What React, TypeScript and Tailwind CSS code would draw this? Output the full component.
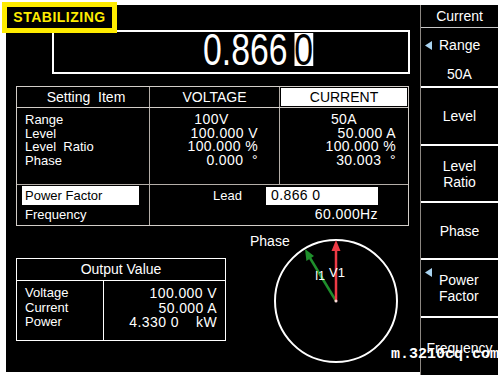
import React from 'react';

const Tri: React.FC = () => (
  <svg width="7" height="9" viewBox="0 0 7 9" className="shrink-0">
    <polygon points="0,4.5 7,0 7,9" fill="#a9d3f0" />
  </svg>
);

const SettingTable: React.FC = () => (
  <div className="mt-[12px] w-[393px] h-[140px] border border-[#d2cdc8] flex flex-col">
    {/* header */}
    <div className="h-[21px] flex border-b border-[#d2cdc8] text-[14px]">
      <div className="w-[133px] border-r border-[#b4aea8] flex items-center justify-center whitespace-pre pl-[6px]">Setting  Item</div>
      <div className="w-[130px] border-r border-[#b4aea8] flex items-center justify-center">VOLTAGE</div>
      <div className="flex-1 p-[1px]">
        <div className="h-full bg-white text-black flex items-center justify-center">CURRENT</div>
      </div>
    </div>

    {/* values */}
    <div className="h-[77px] flex border-b border-[#b4aea8] leading-[13.5px]">
      <div className="w-[133px] border-r border-[#b4aea8] pl-[8px] pt-[5px] text-[13px]">
        <div>Range</div>
        <div>Level</div>
        <div className="whitespace-pre">Level  Ratio</div>
        <div>Phase</div>
      </div>
      <div className="w-[130px] border-r border-[#b4aea8] pt-[5px] text-[14px] tracking-[0.4px] whitespace-pre">
        <div className="text-center pr-[6px]">100V</div>
        <div className="text-right pr-[21px]">100.000 V</div>
        <div className="text-right pr-[21px]">100.000 %</div>
        <div className="text-right pr-[21px]">0.000  °</div>
      </div>
      <div className="flex-1 pt-[5px] text-[14px] tracking-[0.4px] whitespace-pre">
        <div className="text-center">50A</div>
        <div className="text-right pr-[12px]">50.000 A</div>
        <div className="text-right pr-[12px]">100.000 %</div>
        <div className="text-right pr-[12px]">30.003  °</div>
      </div>
    </div>

    {/* power factor / frequency */}
    <div className="flex-1 flex">
      <div className="w-[133px] border-r border-[#b4aea8] pt-[1px] pl-[5px] text-[13px]">
        <div className="w-[117px] h-[19px] bg-white text-black pl-[3px] flex items-center">Power Factor</div>
        <div className="pl-[3px] mt-[2px] leading-[15px]">Frequency</div>
      </div>
      <div className="flex-1 pt-[1px] text-[14px] tracking-[0.4px]">
        <div className="flex items-center h-[19px]">
          <span className="ml-[63px] w-[53px] text-[13px] tracking-normal">Lead</span>
          <div className="w-[112px] h-[18px] bg-white text-black pl-[5px] flex items-center">0.866 0</div>
        </div>
        <div className="text-right pr-[30px] mt-[2px] leading-[15px]">60.000Hz</div>
      </div>
    </div>
  </div>
);

const OutputTable: React.FC = () => (
  <div className="mt-[32px] w-[210px] h-[83px] border border-white flex flex-col">
    <div className="h-[22px] border-b border-white flex items-center justify-center text-[14px]">Output Value</div>
    <div className="flex-1 flex leading-[14.5px]">
      <div className="w-[87px] border-r border-white pl-[8px] pt-[5px] text-[13px]">
        <div>Voltage</div>
        <div>Current</div>
        <div>Power</div>
      </div>
      <div className="flex-1 pt-[5px] pr-[8px] text-right text-[14px] tracking-[0.4px] whitespace-pre">
        <div>100.000 V</div>
        <div>50.000 A</div>
        <div>4.330 0    kW</div>
      </div>
    </div>
  </div>
);

const PhaseChart: React.FC = () => (
  <div className="relative ml-[14px] w-[170px] h-[145px]">
    <div className="pl-[10px] pt-[7px] text-[14px] leading-[16px]">Phase</div>
    <svg className="absolute inset-0" width="170" height="145" viewBox="0 0 170 145">
      <circle cx="96" cy="75" r="61" fill="none" stroke="#ffffff" strokeWidth="2" />
      {/* current vector */}
      <line x1="96" y1="75" x2="70" y2="32" stroke="#1f8f2c" strokeWidth="2.5" />
      <polygon points="65,23 74,30 66.4,35" fill="#1f8f2c" />
      {/* voltage vector */}
      <line x1="96" y1="75" x2="96" y2="24" stroke="#ee3a45" strokeWidth="2.5" />
      <polygon points="96,14 91.5,25 100.5,25" fill="#ee3a45" />
      <circle cx="96" cy="75" r="1.5" fill="#ffdada" />
      <text x="75" y="54" fill="#ffffff" fontSize="12" fontFamily="Liberation Sans, Arial, sans-serif">I1</text>
      <text x="89" y="51" fill="#ffffff" fontSize="13" fontFamily="Liberation Sans, Arial, sans-serif">V1</text>
    </svg>
  </div>
);

const SideMenu: React.FC = () => (
  <div className="w-[78px] h-[370px] bg-black border-l border-[#8c8782] flex flex-col text-[14px] leading-[16px]">
    <div className="h-[23px] border-b border-[#c8c8c8] flex items-center justify-center">Current</div>
    <div className="h-[60px] border-b-2 border-white flex flex-col">
      <div className="flex items-center gap-[7px] pl-[4px] pt-[9px]">
        <Tri />
        <span>Range</span>
      </div>
      <div className="mt-auto pb-[4px] text-center">50A</div>
    </div>
    <div className="h-[58px] border-b-2 border-white flex items-center justify-center">Level</div>
    <div className="h-[57px] border-b-2 border-white flex flex-col items-center justify-center">
      <span>Level</span>
      <span>Ratio</span>
    </div>
    <div className="h-[57px] border-b-2 border-white flex items-center justify-center">Phase</div>
    <div className="h-[58px] border-b-2 border-white flex items-center pl-[4px]">
      <div className="self-start mt-[8px]">
        <Tri />
      </div>
      <div className="ml-[7px] flex flex-col">
        <span>Power</span>
        <span>Factor</span>
      </div>
    </div>
    <div className="flex-1 flex items-start justify-center pt-[22px]">Frequency</div>
  </div>
);

const App: React.FC = () => {
  return (
    <div className="relative w-[498px] h-[375px] bg-white overflow-hidden text-white font-['Liberation_Sans',Arial,sans-serif]">
      <div className="flex pl-[6px] pt-[5px]">
        {/* main display */}
        <div className="w-[414px] h-[367px] bg-black pl-[10px] flex flex-col">
          <div className="ml-[36px] mt-[25px] w-[358px] h-[44px] border-2 border-white pt-[1px] pl-[149px]">
            <span className="inline-block origin-left scale-x-[0.75] text-[45px] leading-[33px] whitespace-pre">
              0.866<span className="inline-block bg-white text-black ml-[9px]">0</span>
            </span>
          </div>

          <SettingTable />

          <div className="flex items-start">
            <OutputTable />
            <PhaseChart />
          </div>
        </div>

        <SideMenu />
      </div>

      {/* status badge */}
      <div className="absolute left-[2px] top-[2px] w-[115px] h-[31px] border-[5px] border-[#ffec00] bg-black flex items-center justify-center text-[#ffec00] text-[14px] font-bold tracking-[0.5px]">
        STABILIZING
      </div>

      {/* watermark */}
      <div className="absolute left-[391px] top-[347px] text-[15px] font-bold leading-[16px] text-white font-['Liberation_Mono',monospace]">
        m.3210cq.com
      </div>
    </div>
  );
};

export default App;
